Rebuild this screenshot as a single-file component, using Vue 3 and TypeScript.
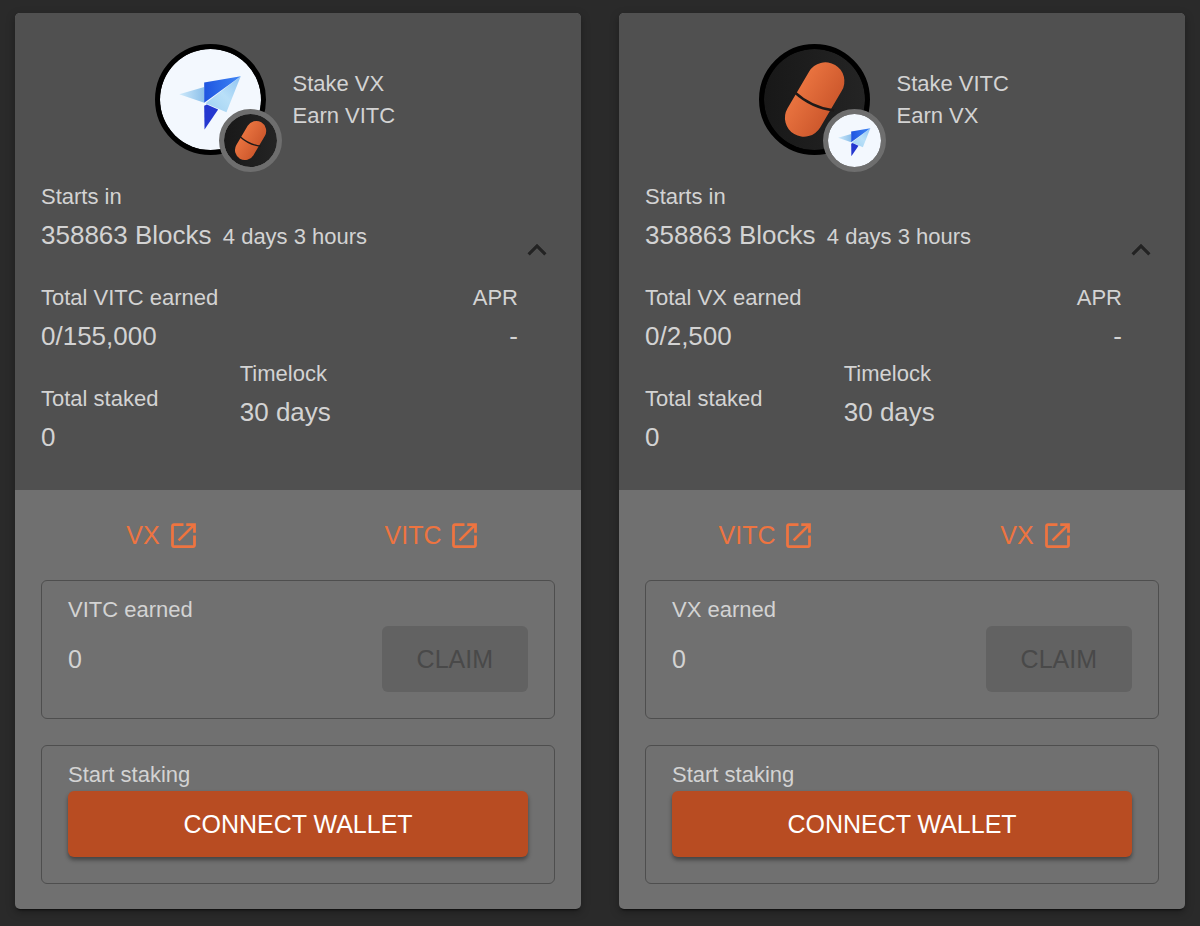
<script setup lang="ts">
import { ref } from 'vue'

interface Pool {
  stake: string
  earn: string
  cap: string
  blocks: number
  remaining: string
  lock: string
}

const pools = ref<Pool[]>([
  { stake: 'VX', earn: 'VITC', cap: '155,000', blocks: 358863, remaining: '4 days 3 hours', lock: '30 days' },
  { stake: 'VITC', earn: 'VX', cap: '2,500', blocks: 358863, remaining: '4 days 3 hours', lock: '30 days' },
])

const logo = (token: string): string => `#logo-${token.toLowerCase()}`
</script>

<template>
  <main class="pools">
    <svg class="defs" aria-hidden="true">
      <defs>
        <linearGradient id="wing-left" x1="0" y1="0" x2="1" y2="0">
          <stop offset="0" stop-color="#cfeafb" />
          <stop offset="1" stop-color="#8cc0ea" />
        </linearGradient>
        <linearGradient id="wing-top" x1="0" y1="0" x2="1" y2="0">
          <stop offset="0" stop-color="#1f55e0" />
          <stop offset="1" stop-color="#3f86f5" />
        </linearGradient>
        <linearGradient id="wing-right" x1="0" y1="1" x2="1" y2="0">
          <stop offset="0" stop-color="#9fd0f2" />
          <stop offset="0.5" stop-color="#b9e0f8" />
          <stop offset="1" stop-color="#8fc4f2" />
        </linearGradient>
        <linearGradient id="pill" gradientUnits="userSpaceOnUse" x1="165" y1="180" x2="280" y2="250">
          <stop offset="0" stop-color="#ea7440" />
          <stop offset="1" stop-color="#cb562b" />
        </linearGradient>
        <linearGradient id="pill-bg" x1="0" y1="0" x2="1" y2="0">
          <stop offset="0" stop-color="#181818" />
          <stop offset="1" stop-color="#242424" />
        </linearGradient>
      </defs>
      <symbol id="logo-vx" viewBox="62 56 304 304">
        <circle cx="214" cy="208" r="152" fill="#f3f8fe" />
        <path d="M120 192 195 170V218Z" fill="url(#wing-left)" />
        <path d="M305 138 262 246 199 219Z" fill="url(#wing-right)" />
        <path d="M195 157 305 138 195 218Z" fill="url(#wing-top)" />
        <path d="M195 227 203 223 237 238 196 298Z" fill="#2438d0" />
      </symbol>
      <symbol id="logo-vitc" viewBox="71 56 304 304">
        <circle cx="223" cy="208" r="152" fill="url(#pill-bg)" />
        <path d="M256 153 191 263" stroke="url(#pill)" stroke-width="114" stroke-linecap="round" />
        <path d="M162 185Q214 233 282 241" fill="none" stroke="#1e1a19" stroke-width="8" />
      </symbol>
    </svg>

    <article v-for="pool in pools" :key="pool.stake" class="card">
      <header class="summary">
        <div class="content">
          <div class="pair">
            <div class="logos">
              <svg class="logo"><use :href="logo(pool.stake)" /></svg>
              <svg class="badge"><use :href="logo(pool.earn)" /></svg>
            </div>
            <div class="names">
              <div>Stake {{ pool.stake }}</div>
              <div>Earn {{ pool.earn }}</div>
            </div>
          </div>
          <dl class="stat">
            <dt>Starts in</dt>
            <dd>{{ pool.blocks }} Blocks <span class="remaining">{{ pool.remaining }}</span></dd>
          </dl>
          <div class="row">
            <dl class="stat">
              <dt>Total {{ pool.earn }} earned</dt>
              <dd>0/{{ pool.cap }}</dd>
            </dl>
            <dl class="stat right">
              <dt>APR</dt>
              <dd>-</dd>
            </dl>
          </div>
          <div class="columns">
            <dl class="stat lower">
              <dt>Total staked</dt>
              <dd>0</dd>
            </dl>
            <dl class="stat">
              <dt>Timelock</dt>
              <dd>{{ pool.lock }}</dd>
            </dl>
          </div>
        </div>
        <button class="toggle" type="button" aria-label="Collapse pool" aria-expanded="true">
          <svg viewBox="0 0 24 24"><path d="M12 8 6 14l1.41 1.41L12 10.83l4.59 4.58L18 14z" /></svg>
        </button>
      </header>

      <div class="details">
        <nav class="links">
          <a v-for="token in [pool.stake, pool.earn]" :key="token" href="#">
            {{ token }}
            <svg viewBox="0 0 24 24" aria-hidden="true">
              <path d="M19 19H5V5h7V3H5c-1.11 0-2 .9-2 2v14c0 1.1.89 2 2 2h14c1.1 0 2-.9 2-2v-7h-2v7zM14 3v2h3.59l-9.83 9.83 1.41 1.41L19 6.41V10h2V3h-7z" />
            </svg>
          </a>
        </nav>
        <section class="box">
          <h3>{{ pool.earn }} earned</h3>
          <div class="claim">
            <span>0</span>
            <button class="button" type="button" disabled>CLAIM</button>
          </div>
        </section>
        <section class="box">
          <h3>Start staking</h3>
          <button class="button primary" type="button">CONNECT WALLET</button>
        </section>
      </div>
    </article>
  </main>
</template>

<style>
html {
  background: #2a2a2a;
}

body {
  margin: 0;
}
</style>

<style scoped>
.pools {
  display: grid;
  grid-template-columns: 1fr 1fr;
  gap: 38px;
  padding: 13px 15px 17px;
  font-family: "Liberation Sans", Arial, Helvetica, sans-serif;
  font-size: 25px;
  line-height: 38px;
  color: #d3d3d3;
}

.defs {
  position: absolute;
  width: 0;
  height: 0;
}

.card {
  border-radius: 5px;
  overflow: hidden;
  background: #707070;
  box-shadow: 0 3px 2px -2px rgba(0, 0, 0, 0.6), 0 3px 10px rgba(0, 0, 0, 0.3);
}

.summary {
  display: flex;
  align-items: center;
  padding: 31px 25px 34px 26px;
  background: #505050;
}

.content {
  flex: 1;
}

.pair {
  display: flex;
  gap: 26px;
  margin-bottom: 23px;
  padding-left: 24%;
}

.logos {
  position: relative;
}

.logo {
  display: block;
  box-sizing: border-box;
  width: 111px;
  height: 111px;
  border: 5px solid #000;
  border-radius: 50%;
  background: #000;
}

.badge {
  position: absolute;
  right: -16px;
  bottom: -17px;
  box-sizing: border-box;
  width: 63px;
  height: 63px;
  border: 5px solid #6e6e6e;
  border-radius: 50%;
  background: #6e6e6e;
}

.names {
  align-self: center;
  font-size: 22px;
  line-height: 32px;
}

.stat {
  margin: 0;
}

.stat dt {
  font-size: 22px;
}

.stat dd {
  margin: 0;
  font-size: 26px;
}

.remaining {
  margin-left: 4px;
  font-size: 22px;
  line-height: 1;
}

.row {
  display: flex;
  justify-content: space-between;
  margin-top: 25px;
}

.right {
  text-align: right;
}

.columns {
  display: grid;
  grid-template-columns: 5fr 7fr;
}

.lower {
  margin-top: 25px;
}

.toggle {
  display: flex;
  padding: 0;
  border: 0;
  background: none;
  cursor: pointer;
}

.toggle svg {
  width: 38px;
  height: 38px;
  fill: #232323;
}

.details {
  display: flex;
  flex-direction: column;
  gap: 26px;
  padding: 26px 26px 25px;
}

.links {
  display: grid;
  grid-template-columns: 1fr 1fr;
  margin: 0 -13px;
}

.links a {
  display: flex;
  justify-content: center;
  align-items: center;
  gap: 7px;
  color: #ee7440;
  text-decoration: none;
}

.links svg {
  width: 33px;
  height: 33px;
  fill: currentColor;
}

.box {
  padding: 13px 26px 26px;
  border: 1px solid #4e4e4e;
  border-radius: 6px;
}

.box h3 {
  margin: 0;
  font-size: 22px;
  font-weight: 400;
  line-height: 32px;
}

.claim {
  display: flex;
  justify-content: space-between;
  align-items: center;
}

.button {
  height: 66px;
  padding: 0 35px;
  border: 0;
  border-radius: 6px;
  background: #626262;
  color: #494949;
  font-family: inherit;
  font-size: 25px;
}

.primary {
  display: block;
  width: 100%;
  background: #b84c22;
  box-shadow: 0 3px 4px rgba(0, 0, 0, 0.4);
  color: #fff;
  cursor: pointer;
}
</style>
